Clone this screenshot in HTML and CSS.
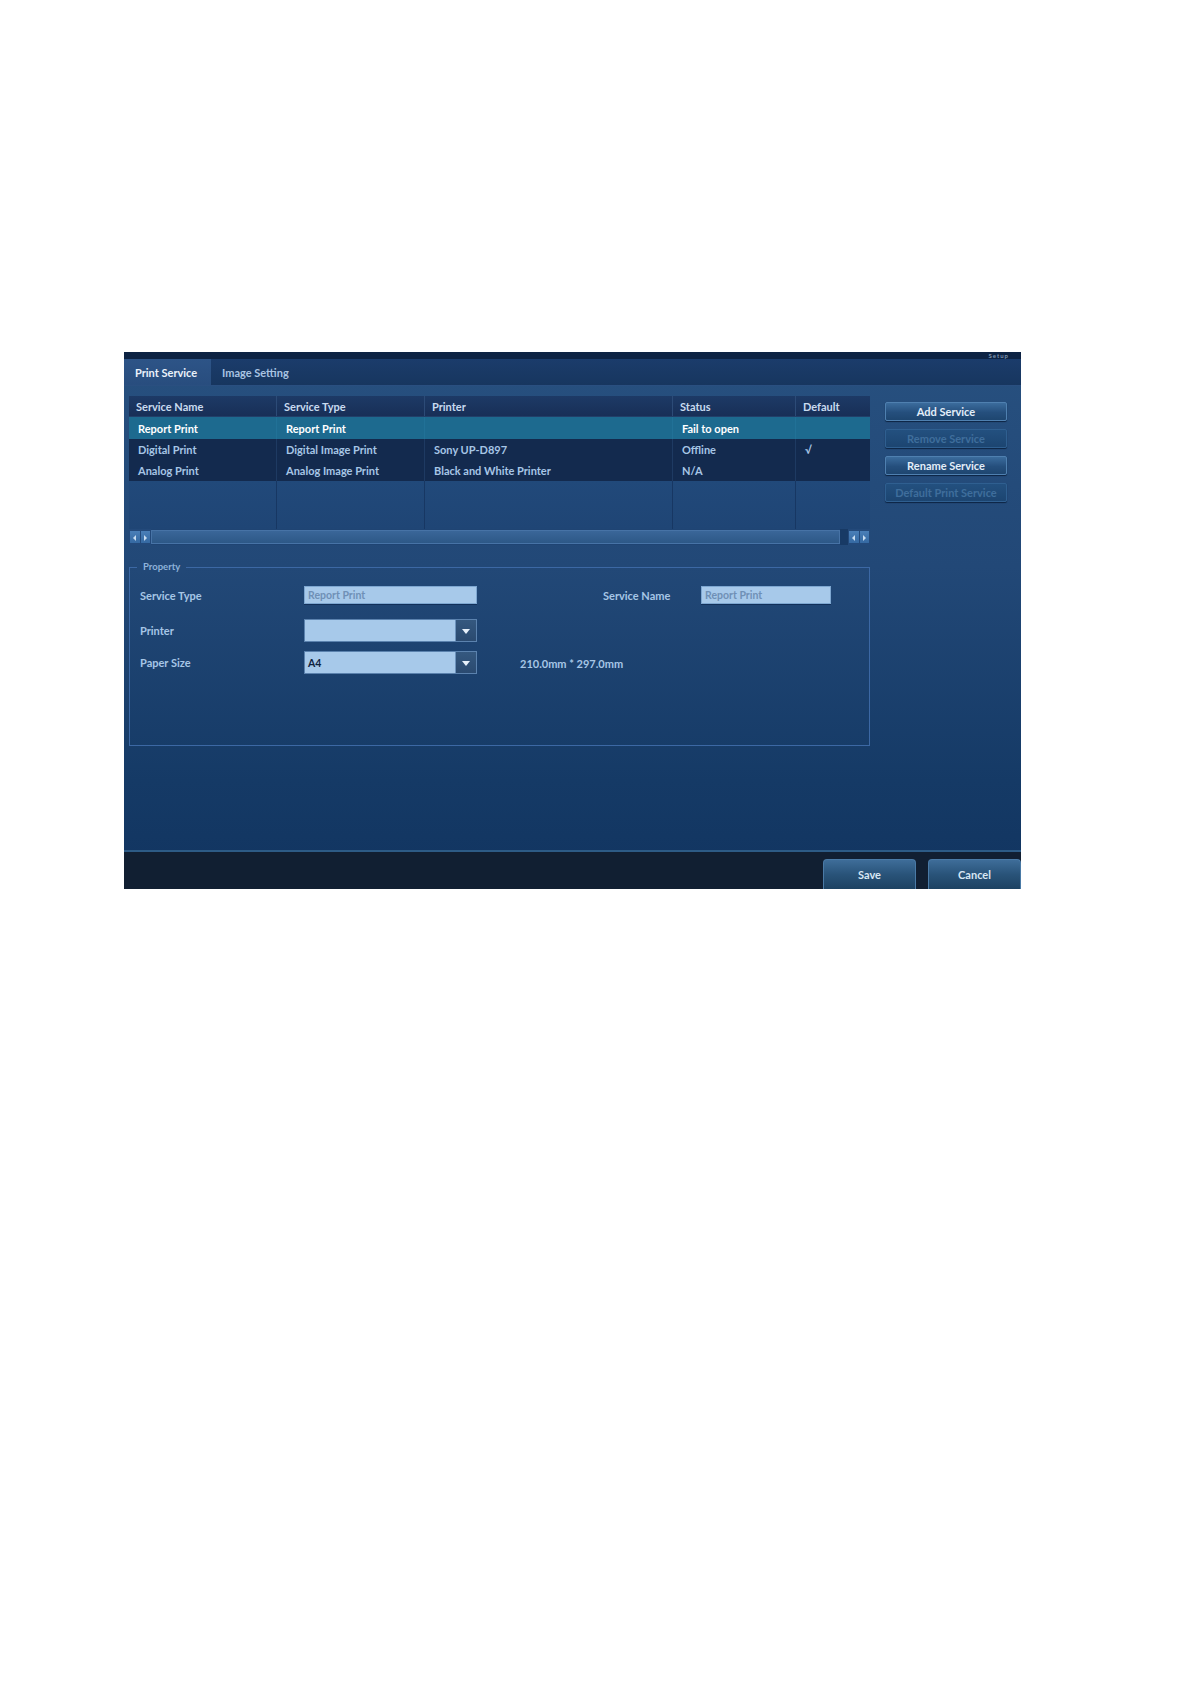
FILE: index.html
```html
<!DOCTYPE html>
<html>
<head>
<meta charset="utf-8">
<link rel="stylesheet" href="styles.css">
</head>
<body>
<div class="page">
  <div class="panel">
    <div class="topstrip"><span class="cut">Setup</span></div>
    <div class="tabs">
      <div class="tab active">Print Service</div>
      <div class="tab">Image Setting</div>
    </div>
    <div class="content">
      <div class="main">
        <div class="table">
          <div class="trow thead">
            <div class="cell">Service Name</div>
            <div class="cell">Service Type</div>
            <div class="cell">Printer</div>
            <div class="cell">Status</div>
            <div class="cell">Default</div>
          </div>
          <div class="trow sel">
            <div class="cell">Report Print</div>
            <div class="cell">Report Print</div>
            <div class="cell"></div>
            <div class="cell">Fail to open</div>
            <div class="cell"></div>
          </div>
          <div class="trow">
            <div class="cell">Digital Print</div>
            <div class="cell">Digital Image Print</div>
            <div class="cell">Sony UP-D897</div>
            <div class="cell">Offline</div>
            <div class="cell">√</div>
          </div>
          <div class="trow last">
            <div class="cell">Analog Print</div>
            <div class="cell">Analog Image Print</div>
            <div class="cell">Black and White Printer</div>
            <div class="cell">N/A</div>
            <div class="cell"></div>
          </div>
          <div class="trow filler">
            <div class="cell"></div>
            <div class="cell"></div>
            <div class="cell"></div>
            <div class="cell"></div>
            <div class="cell"></div>
          </div>
          <div class="scrollbar">
            <div class="arrows">
              <span class="arr left"></span><span class="arr right"></span>
            </div>
            <div class="track"></div>
            <div class="gap"></div>
            <div class="arrows">
              <span class="arr left"></span><span class="arr right"></span>
            </div>
          </div>
        </div>
        <div class="property">
          <div class="legend">Property</div>
          <div class="pgrid">
            <div class="lbl r1">Service Type</div>
            <div class="input r1">Report Print</div>
            <div class="lbl r1 c4">Service Name</div>
            <div class="input r1 c5">Report Print</div>
            <div class="lbl r2">Printer</div>
            <div class="select r2"><span class="val"></span><span class="drop"></span></div>
            <div class="lbl r3">Paper Size</div>
            <div class="select r3"><span class="val dark">A4</span><span class="drop"></span></div>
            <div class="dims r3">210.0mm * 297.0mm</div>
          </div>
        </div>
      </div>
      <div class="side">
        <div class="btn">Add Service</div>
        <div class="btn disabled">Remove Service</div>
        <div class="btn">Rename Service</div>
        <div class="btn disabled">Default Print Service</div>
      </div>
    </div>
    <div class="footer">
      <div class="fbtn">Save</div>
      <div class="fbtn">Cancel</div>
    </div>
  </div>
</div>
</body>
</html>
```

FILE: styles.css
```css
* { box-sizing: border-box; }
html, body { margin: 0; padding: 0; background: #ffffff; }
body {
  width: 1190px;
  height: 1684px;
  font-family: Lato, "Open Sans", "Liberation Sans", sans-serif;
  font-weight: 700;
}
.page { padding: 352px 0 0 124px; }
.panel {
  width: 897px;
  height: 537px;
  display: flex;
  flex-direction: column;
  background: linear-gradient(180deg, #27507f 0%, #224877 40%, #153a66 80%, #113460 100%);
}
.topstrip {
  height: 7px;
  background: #0d2343;
  display: flex;
  justify-content: flex-end;
  align-items: center;
  padding-right: 12px;
}
.cut {
  font-size: 6px;
  line-height: 7px;
  color: #7f95b0;
  letter-spacing: 1px;
}
.tabs {
  height: 27px;
  display: flex;
  background: linear-gradient(180deg, #1b3c6b, #17365f);
  border-bottom: 1px solid #2a4f80;
}
.tab {
  height: 100%;
  display: flex;
  align-items: center;
  padding: 0 12px 0 11px;
  font-size: 11px;
  color: #a9c4e2;
}
.tab.active {
  width: 87px;
  background: linear-gradient(180deg, #2d5487, #284d7e);
  color: #eaf2fb;
}
.content {
  flex: 1;
  display: flex;
  padding: 10px 0 0 5px;
}
.main { width: 741px; }
.table { width: 741px; }
.trow {
  display: grid;
  grid-template-columns: 147px 148px 248px 123px 75px;
  height: 21px;
  background: #132a4e;
}
.trow .cell {
  display: flex;
  align-items: center;
  padding-left: 9px;
  font-size: 11px;
  color: #a7c6e6;
  border-left: 1px solid #1e3a62;
  white-space: nowrap;
}
.trow .cell:first-child { border-left: none; }
.thead {
  background: linear-gradient(180deg, #1d3a66, #182f57);
  border-bottom: 1px solid #223f69;
}
.thead .cell { color: #c9dbef; padding-left: 7px; border-left-color: #2c4b77; }
.sel { background: #1d6a8f; height: 22px; }
.sel .cell { color: #ffffff; border-left-color: #217197; }
.trow.last { height: 21px; }
.filler {
  height: 48px;
  background: linear-gradient(180deg, #21497a, #1f4575);
}
.filler .cell { border-left: 1px solid #173763; }
.scrollbar {
  height: 16px;
  display: flex;
  background: #1f4473;
}
.arrows { display: flex; width: 22px; padding: 2px 1px; gap: 1px; background: #23497a; }
.arr {
  flex: 1;
  background: linear-gradient(180deg, #4a7fb8, #3569a2);
  position: relative;
}
.arr::after {
  content: "";
  position: absolute;
  top: 4px;
  left: 3px;
  border-top: 3px solid transparent;
  border-bottom: 3px solid transparent;
}
.arr.left::after { border-right: 3px solid #c7dcf0; }
.arr.right::after { border-left: 3px solid #c7dcf0; }
.track {
  flex: 1;
  margin: 1px 0;
  background: linear-gradient(180deg, #3a6699, #2d5887);
  border: 1px solid #4773a6;
}
.gap { width: 8px; background: #183a65; }
.property {
  margin-top: 22px;
  height: 179px;
  border: 1px solid #3c68a4;
  position: relative;
  padding: 18px 0 0 10px;
}
.legend {
  position: absolute;
  top: -7px;
  left: 7px;
  padding: 0 6px;
  font-size: 9.5px;
  line-height: 12px;
  color: #8eb2da;
  background: #224877;
}
.pgrid {
  display: grid;
  grid-template-columns: 164px 173px 126px 98px 130px;
  grid-template-rows: 33px 32px 23px;
}
.r1 { grid-row: 1; }
.r2 { grid-row: 2; }
.r3 { grid-row: 3; }
.c4 { grid-column: 4; }
.c5 { grid-column: 5; }
.lbl {
  font-size: 11px;
  color: #a7c6e6;
  display: flex;
  align-items: center;
  grid-column: 1;
  height: 18px;
}
.lbl.r2, .lbl.r3 { height: 23px; }
.lbl.c4 { grid-column: 4; }
.input {
  grid-column: 2;
  height: 18px;
  background: #a7c9ea;
  border: 1px solid #7ea7d1;
  box-shadow: 0 1px 0 #12305a;
  font-size: 10.5px;
  color: #6f90b6;
  display: flex;
  align-items: center;
  padding-left: 3px;
}
.input.c5 { grid-column: 5; }
.select {
  grid-column: 2;
  height: 23px;
  display: flex;
  border: 1px solid #5b82ae;
}
.select .val {
  flex: 1;
  background: #a7c9ea;
  font-size: 10.5px;
  display: flex;
  align-items: center;
  padding-left: 3px;
}
.select .val.dark { color: #0f2340; }
.drop {
  width: 21px;
  background: linear-gradient(180deg, #35587f, #2a4a70);
  border-left: 1px solid #6d93bd;
  position: relative;
}
.drop::after {
  content: "";
  position: absolute;
  top: 9px;
  left: 6px;
  border-left: 4px solid transparent;
  border-right: 4px solid transparent;
  border-top: 5px solid #e6f0fa;
}
.dims {
  grid-column: 3 / 6;
  padding-left: 43px;
  font-size: 11px;
  color: #a7c6e6;
  display: flex;
  align-items: center;
  height: 25px;
}
.side {
  margin-left: 15px;
  width: 122px;
  display: flex;
  flex-direction: column;
  gap: 8px;
  padding-top: 6px;
}
.btn {
  height: 19px;
  border-radius: 2px;
  background: linear-gradient(180deg, #3b6c9d, #254f7d 55%, #1e4670);
  border: 1px solid #4f80b0;
  box-shadow: 0 1px 1px #0d2443;
  display: flex;
  align-items: center;
  justify-content: center;
  font-size: 11px;
  color: #e3eef9;
}
.btn.disabled {
  background: linear-gradient(180deg, #23507f, #1c4571);
  border-color: #2f5f90;
  color: #3f6e9c;
}
.footer {
  height: 39px;
  margin-top: auto;
  border-top: 2px solid #2d5b86;
  background: #111f32;
  display: flex;
  justify-content: flex-end;
  align-items: flex-end;
  gap: 12px;
}
.fbtn {
  width: 93px;
  height: 30px;
  border-radius: 4px 4px 0 0;
  background: linear-gradient(180deg, #3e6d99, #295379 50%, #1d4262);
  border: 1px solid #4a7aa6;
  border-bottom: none;
  display: flex;
  align-items: center;
  justify-content: center;
  font-size: 11px;
  color: #d9e7f4;
}
```
